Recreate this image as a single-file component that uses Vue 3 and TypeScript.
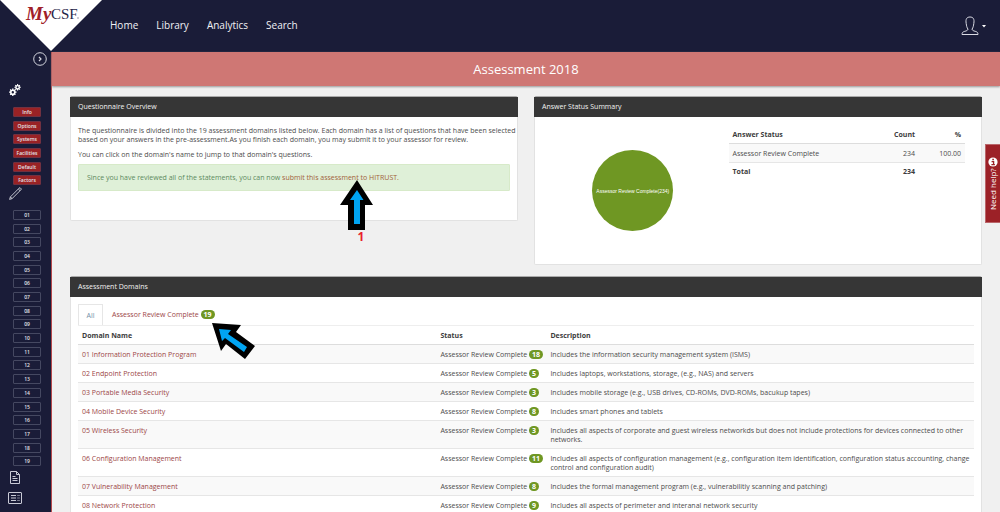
<script setup lang="ts">
interface Domain {
  name: string
  count: number
  description: string
}

const navItems: string[] = ['Home', 'Library', 'Analytics', 'Search']
const infoItems: string[] = ['Info', 'Options', 'Systems', 'Facilities', 'Default', 'Factors']
const domainNumbers: string[] = Array.from({ length: 19 }, (_, i) => String(i + 1).padStart(2, '0'))
const gearTeeth: number[] = [0, 45, 90, 135]

const domains: Domain[] = [
  { name: '01 Information Protection Program', count: 18, description: 'Includes the information security management system (ISMS)' },
  { name: '02 Endpoint Protection', count: 5, description: 'Includes laptops, workstations, storage, (e.g., NAS) and servers' },
  { name: '03 Portable Media Security', count: 3, description: 'Includes mobile storage (e.g., USB drives, CD-ROMs, DVD-ROMs, bacukup tapes)' },
  { name: '04 Mobile Device Security', count: 8, description: 'Includes smart phones and tablets' },
  { name: '05 Wireless Security', count: 3, description: 'Includes all aspects of corporate and guest wireless networkds but does not include protections for devices connected to other networks.' },
  { name: '06 Configuration Management', count: 11, description: 'Includes all aspects of configuration management (e.g., configuration item identification, configuration status accounting, change control and configuration audit)' },
  { name: '07 Vulnerability Management', count: 8, description: 'Includes the formal management program (e.g., vulnerabilitiy scanning and patching)' },
  { name: '08 Network Protection', count: 9, description: 'Includes all aspects of perimeter and interanal network security' },
]
</script>

<template>
  <div class="app">
    <header class="topbar">
      <a class="logo" href="#" aria-label="MyCSF">
        <svg viewBox="0 0 102 52" width="102" height="52">
          <polygon points="0,0 102,0 51,51" fill="#fff" />
          <text class="logo-my" x="26" y="20">My</text>
          <text class="logo-csf" x="51" y="19">CSF</text>
          <path d="M77 18h2" stroke="#99a" stroke-width="1" />
        </svg>
      </a>
      <nav class="main-nav">
        <a v-for="item in navItems" :key="item" href="#">{{ item }}</a>
      </nav>
      <button class="user" type="button" aria-label="Account">
        <svg viewBox="0 0 18 20" width="18" height="20" fill="none" stroke="#d9dae3" stroke-width="1">
          <path d="M7 13.200C5.800 11.500 5.500 9.700 5.200 7.500C4.400 3 5.800 1 9 1s4.600 2 3.800 6.500c-.3 2.200-.6 4-1.800 5.700c.3 1.200 1.500 1.700 3.200 2.100c2 .5 2.800 1.300 2.800 3.200H1c0-1.900.8-2.700 2.800-3.200c1.700-.4 2.900-.9 3.200-2.100z" />
        </svg>
        <svg viewBox="0 0 4 3" width="4" height="3"><path d="M0 0h4L2 2.500z" fill="#fff" /></svg>
      </button>
    </header>

    <div class="below">
      <aside class="sidebar">
        <div class="side-top">
          <button class="icon-btn expand" type="button" aria-label="Expand menu">
            <svg viewBox="0 0 14 14" width="14" height="14" fill="none" stroke="#d5d6df">
              <circle cx="7" cy="7" r="6.300" stroke-width="1" />
              <path d="M6 5l2 2l-2 2" stroke-width="1.200" />
            </svg>
          </button>
          <button class="icon-btn gears" type="button" aria-label="Settings">
            <svg viewBox="0 0 12 12" width="12" height="12" fill="none" stroke="#fff">
              <g transform="translate(3.800 8.200)">
                <circle r="2" stroke-width="1.600" />
                <path v-for="a in gearTeeth" :key="a" d="M-3.700 0h1.500M2.200 0h1.500" stroke-width="1.300" :transform="`rotate(${a})`" />
              </g>
              <g transform="translate(8.600 3.300)">
                <circle r="1.700" stroke-width="1.400" />
                <path v-for="a in gearTeeth" :key="a" d="M-3.200 0h1.400M1.800 0h1.400" stroke-width="1.100" :transform="`rotate(${a})`" />
              </g>
            </svg>
          </button>
        </div>
        <ul class="side-list info">
          <li v-for="item in infoItems" :key="item"><button type="button" class="pill red">{{ item }}</button></li>
        </ul>
        <button class="icon-btn pencil" type="button" aria-label="Edit">
          <svg viewBox="0 0 13 13" width="13" height="13" fill="none" stroke="#d5d6df" stroke-width="0.900">
            <path d="M.6 12.400L1.400 9.900L10.100 1.200L11 .6L12.400 2L11.800 2.900L3.100 11.600zM1.400 9.900L3.100 11.600M9.300 2l1.700 1.700" />
          </svg>
        </button>
        <ul class="side-list numbers">
          <li v-for="n in domainNumbers" :key="n"><button type="button" class="pill">{{ n }}</button></li>
        </ul>
        <div class="side-bottom">
          <button class="icon-btn" type="button" aria-label="Documents">
            <svg viewBox="0 0 14 13" width="14" height="13" fill="none" stroke="#c9cad6">
              <path d="M2.500.5h6l3 3v9h-9zM8.500.5v3h3M4.500 5.500h3M4.500 7.500h5M4.500 9.500h5" />
            </svg>
          </button>
          <button class="icon-btn" type="button" aria-label="Reports">
            <svg viewBox="0 0 14 12" width="14" height="12" fill="none" stroke="#c9cad6">
              <rect x=".5" y=".5" width="13" height="11" rx=".5" />
              <path d="M3 3.500h5M3 6h5M3 8.500h5" />
              <path d="M9.500 3.500h2M9.500 6h2M9.500 8.500h2" stroke-dasharray="1 .4" />
            </svg>
          </button>
        </div>
      </aside>

      <main class="content">
        <h1 class="page-title">Assessment 2018</h1>
        <div class="panels">
          <section class="panel overview">
            <h2>Questionnaire Overview</h2>
            <div class="panel-body overview-body">
              <p>The questionnaire is divided into the 19 assessment domains listed below. Each domain has a list of questions that have been selected based on your answers in the pre-assessment.As you finish each domain, you may submit it to your assessor for review.</p>
              <p>You can click on the domain's name to jump to that domain's questions.</p>
              <div class="alert">Since you have reviewed all of the statements, you can now <a href="#">submit this assessment to HITRUST.</a></div>
            </div>
          </section>

          <section class="panel summary">
            <h2>Answer Status Summary</h2>
            <div class="panel-body summary-body">
              <div class="chart"><div class="pie">Assessor Review Complete(234)</div></div>
              <table class="status-table">
                <thead>
                  <tr><th>Answer Status</th><th class="num">Count</th><th class="num">%</th></tr>
                </thead>
                <tbody>
                  <tr class="shaded"><td>Assessor Review Complete</td><td class="num">234</td><td class="num">100.00</td></tr>
                  <tr class="total"><th>Total</th><th class="num">234</th><td></td></tr>
                </tbody>
              </table>
            </div>
          </section>

          <section class="panel domains">
            <h2>Assessment Domains</h2>
            <div class="panel-body domains-body">
              <div class="tabs">
                <button type="button" class="tab active">All</button>
                <button type="button" class="tab">Assessor Review Complete <span class="badge">19</span></button>
              </div>
              <table class="domain-table">
                <thead>
                  <tr><th class="col-name">Domain Name</th><th class="col-status">Status</th><th>Description</th></tr>
                </thead>
                <tbody>
                  <tr v-for="d in domains" :key="d.name">
                    <td><a href="#">{{ d.name }}</a></td>
                    <td class="status">Assessor Review Complete <span class="badge">{{ d.count }}</span></td>
                    <td>{{ d.description }}</td>
                  </tr>
                </tbody>
              </table>
            </div>
          </section>
        </div>
      </main>
    </div>

    <button class="help" type="button">
      <span>Need help?</span>
      <svg viewBox="0 0 10 10" width="10" height="10">
        <circle cx="5" cy="5" r="4.600" fill="#fff" />
        <path d="M4.300 2.500h1.600M3.600 4.600h2v3M3.400 7.600h3.500" fill="none" stroke="#9c2127" stroke-width="1.300" transform="rotate(180 5 5)" />
      </svg>
    </button>

    <div class="callout first">
      <svg viewBox="0 0 34 51" width="34" height="51">
        <polygon points="17,0 33,25 25,25 25,50 8,50 8,25 0,25" fill="#000" />
        <polygon points="17,10 23.500,20 20,20 20,44 14,44 14,20 10,20" fill="#00a4f2" />
      </svg>
      <span>1</span>
    </div>
    <svg class="callout second" viewBox="0 0 44 38" width="44" height="38">
      <polygon points="0,0 29,2 24,9 43,23 33,36 14,21 9,28" fill="#000" />
      <polygon points="7,6 19,7 16,11 35,24 32,29 13,15 10,18" fill="#00a4f2" />
    </svg>
  </div>
</template>

<style>
html,
body {
  margin: 0;
  background: #f0f0f0;
}
</style>

<style scoped>
.app {
  position: relative;
  display: flex;
  flex-direction: column;
  height: 100vh;
  overflow: hidden;
  background: #f0f0f0;
  color: #4c4c4c;
  font: 7px/9px "Open Sans", "Noto Sans", sans-serif;
}
.app * {
  box-sizing: border-box;
}
button {
  margin: 0;
  padding: 0;
  border: 0;
  background: none;
  color: inherit;
  font: inherit;
}
a {
  color: #9c4646;
  text-decoration: none;
}
svg {
  display: block;
}
.topbar {
  display: flex;
  align-items: center;
  flex: none;
  height: 52px;
  padding-right: 14px;
  background: #1a1c38;
}
.logo-my {
  fill: #a02028;
  font: italic bold 19px "Liberation Serif", serif;
}
.logo-csf {
  fill: #1f2547;
  font: 15px "Liberation Serif", serif;
}
.main-nav {
  display: flex;
  gap: 18px;
  margin-left: 8px;
  padding-bottom: 2px;
  font-size: 10px;
  line-height: 14px;
}
.main-nav a {
  color: #f1f1f5;
}
.user {
  display: flex;
  align-items: center;
  gap: 3px;
  margin-left: auto;
}
.below {
  display: flex;
  flex: 1;
  min-height: 0;
}
.sidebar {
  display: flex;
  flex-direction: column;
  flex: none;
  width: 52px;
  border-right: 1px solid #b5484c;
  background: #1a1c38;
}
.side-top {
  display: flex;
  flex-direction: column;
  gap: 18px;
  height: 53px;
}
.expand {
  align-self: flex-end;
  margin-right: 4px;
}
.gears,
.pencil {
  align-self: flex-start;
  margin-left: 9px;
}
.pencil {
  height: 21px;
  padding-bottom: 8px;
}
.side-list {
  display: flex;
  flex-direction: column;
  margin: 0;
  padding: 0 0 0 13px;
  list-style: none;
}
.info {
  flex: 6 0 0;
}
.numbers {
  flex: 19 0 0;
}
.side-list li {
  display: flex;
  flex: 1 0 0;
  align-items: center;
}
.pill {
  width: 28px;
  height: 10px;
  border: 1px solid #454861;
  border-radius: 1px;
  color: #e4e4ea;
  font-size: 5px;
  font-weight: 600;
  line-height: 8px;
  text-align: center;
}
.pill.red {
  border-color: #713141;
  background: #992225;
}
.side-bottom {
  display: flex;
  flex-direction: column;
  gap: 8px;
  height: 44px;
  padding: 3px 0 0 8px;
}
.content {
  flex: 1;
  min-width: 0;
}
.page-title {
  margin: 0;
  background: #cf7774;
  box-shadow: 0 1px 2px #999;
  color: #fff;
  font-size: 13px;
  font-weight: 400;
  line-height: 34px;
  text-align: center;
}
.panels {
  display: grid;
  grid-template-columns: 1fr 1fr;
  gap: 11px 16px;
  align-items: start;
  padding: 10px 18px 0;
}
.panel {
  border: 1px solid #e2e2e2;
  border-top-color: #aaa;
  border-radius: 2px;
  background: #fff;
}
.panel h2 {
  margin: 0 -1px;
  padding: 0 8px;
  background: #363636;
  color: #f2f2f2;
  font-size: 7px;
  font-weight: 400;
  line-height: 20px;
}
.domains {
  grid-column: 1 / -1;
}
.overview-body {
  padding: 9px 0 29px 7px;
}
.overview-body p {
  margin: 0 0 6px;
}
.overview-body p + p {
  margin-bottom: 5px;
}
.alert {
  margin-right: 7px;
  padding: 8px;
  border: 1px solid #d7eac9;
  border-radius: 1px;
  background: #dff0d8;
  color: #5d8a5e;
}
.alert a {
  color: #a1623a;
}
.summary-body {
  display: flex;
  align-items: flex-start;
  padding: 8px 16px 8px 0;
}
.chart {
  display: flex;
  flex: 1;
  align-items: center;
  justify-content: center;
  height: 131px;
  padding-left: 2px;
}
.pie {
  display: flex;
  align-items: center;
  justify-content: center;
  width: 81px;
  height: 81px;
  border-radius: 50%;
  background: #6f9723;
  color: #fff;
  font: 5px/8px "Liberation Sans", Arial, sans-serif;
  white-space: nowrap;
}
table {
  border-collapse: separate;
  border-spacing: 0;
  text-align: left;
}
th,
td {
  padding: 5px 4px 4px;
  border-top: 1px solid #e6e6e6;
  vertical-align: top;
}
th {
  color: #3c3c3c;
  font-weight: 700;
}
thead th {
  border-top: 0;
  border-bottom: 1px solid #ddd;
}
tbody tr:first-child td {
  border-top: 0;
}
.status-table {
  width: 55%;
}
.status-table tbody th,
.status-table tbody td {
  padding: 4px;
}
.status-table tbody tr:first-child td {
  padding-top: 5px;
}
.status-table .num {
  text-align: right;
}
.shaded td,
.domain-table tbody tr:nth-child(odd) td {
  background: #f9f9f9;
}
.domains-body {
  padding: 7px 7px 20px;
}
.tabs {
  display: flex;
  border-bottom: 1px solid #eee;
}
.tab {
  height: 21px;
  padding: 0 9px;
  color: #9c4646;
}
.tab.active {
  width: 25px;
  padding: 0;
  border: 1px solid #e6e6e6;
  border-bottom: 0;
  color: #7390a8;
}
.badge {
  display: inline-block;
  padding: 0 3px;
  border-radius: 5px;
  background: #6f9723;
  color: #fff;
  font-weight: 700;
}
.domain-table {
  width: 100%;
}
.col-name {
  width: 40%;
}
.col-status {
  width: 110px;
}
.domain-table .status {
  padding-right: 0;
  white-space: nowrap;
}
.help {
  position: absolute;
  top: 144px;
  right: 0;
  display: flex;
  align-items: center;
  justify-content: center;
  gap: 2px;
  width: 15px;
  height: 79px;
  border: 1px solid #b9666a;
  border-left: 0;
  background: #9c2127;
  color: #fff;
  font-size: 8px;
  line-height: 12px;
  writing-mode: vertical-rl;
  transform: rotate(180deg);
}
.callout {
  position: absolute;
}
.first {
  top: 180px;
  left: 340px;
}
.first span {
  display: block;
  padding-left: 8px;
  color: #e8202c;
  font-size: 12px;
  font-weight: 700;
  line-height: 12px;
  text-align: center;
}
.second {
  top: 323px;
  left: 212px;
}
</style>
